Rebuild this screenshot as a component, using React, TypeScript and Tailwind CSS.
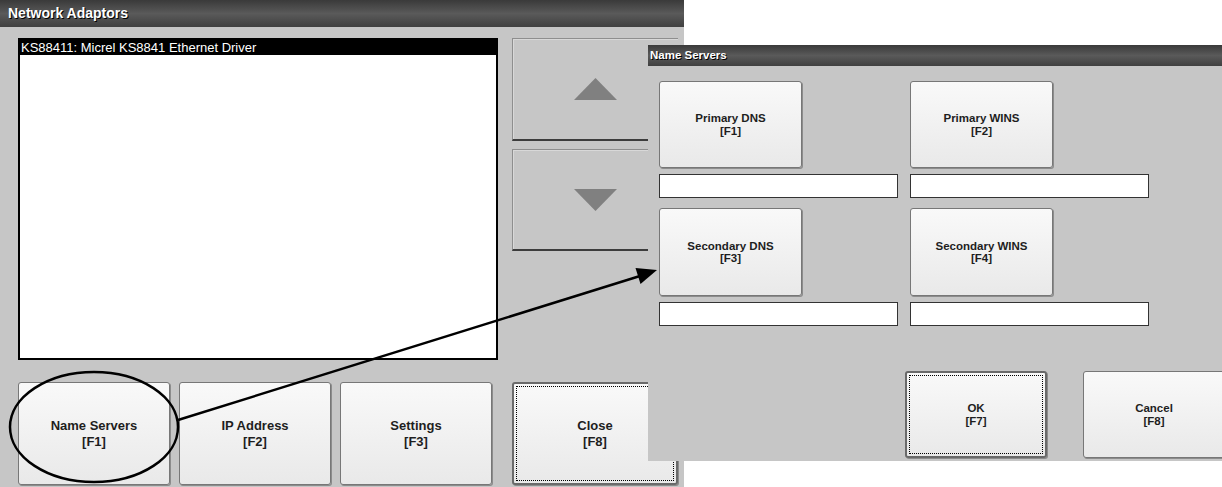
import React from 'react';

type KeyButtonProps = {
  label: string;
  fkey: string;
  size: string;
  small?: boolean;
  focused?: boolean;
};

// Windows CE style push button with a function key hint
const KeyButton: React.FC<KeyButtonProps> = ({ label, fkey, size, small, focused }) => {
  return (
    <div
      className={`relative flex shrink-0 flex-col items-center justify-center rounded-[3px] bg-linear-to-b from-[#f9f9f9] via-[#f1f1f1] to-[#e9e9e9] font-bold text-[#1e1e1e] shadow-[1px_1px_0_#8c8c8c] ${size} ${
        focused ? 'border-2 border-[#6a6a6a]' : 'border border-[#777]'
      } ${small ? 'text-[11.5px] leading-[12.5px]' : 'text-[13px] leading-[16px]'}`}
    >
      {focused && <div className="pointer-events-none absolute inset-[2px] border border-dotted border-black" />}
      <span>{label}</span>
      <span>{fkey}</span>
    </div>
  );
};

const ScrollButton: React.FC<{ up?: boolean; h: string }> = ({ up, h }) => (
  <div className={`flex w-[166px] items-center justify-center border-t border-l border-[#8e8e8e] border-b-2 border-b-[#3c3c3c] bg-[#c6c6c6] shadow-[inset_1px_1px_0_#d8d8d8] ${h}`}>
    <svg width="43" height="22" viewBox="0 0 43 22">
      {up ? <polygon points="21.5,0 43,22 0,22" fill="#808080" /> : <polygon points="0,0 43,0 21.5,22" fill="#808080" />}
    </svg>
  </div>
);

const TextBox: React.FC = () => <div className="h-[24px] w-[239px] border border-[#333] bg-white" />;

const App: React.FC = () => {
  return (
    <div className="relative h-[487px] w-[1222px] overflow-hidden bg-white font-['Liberation_Sans',Arial,sans-serif]">
      {/* Network Adaptors window */}
      <div className="flex h-[487px] w-[684px] flex-col bg-[#c6c6c6]">
        <div className="flex h-[27px] items-center bg-linear-to-b from-[#3a3a3a] via-[#5a5a5a] to-[#404040] pl-2 text-[14px] font-bold text-white [text-shadow:1px_1px_0_#000]">
          Network Adaptors
        </div>
        <div className="flex flex-col pl-[18px] pt-[11px]">
          <div className="flex gap-[14px]">
            <div className="h-[322px] w-[480px] border-2 border-black bg-white">
              <div className="h-[15px] bg-black pl-[1px] text-[13px] leading-[15px] text-white">
                KS88411: Micrel KS8841 Ethernet Driver
              </div>
            </div>
            <div className="flex flex-col gap-2">
              <ScrollButton up h="h-[103px]" />
              <ScrollButton h="h-[102px]" />
            </div>
          </div>
          <div className="mt-[22px] flex">
            <div className="flex gap-[9px]">
              <KeyButton label="Name Servers" fkey="[F1]" size="w-[152px] h-[103px]" />
              <KeyButton label="IP Address" fkey="[F2]" size="w-[152px] h-[103px]" />
              <KeyButton label="Settings" fkey="[F3]" size="w-[152px] h-[103px]" />
            </div>
            <div className="ml-[20px]">
              <KeyButton label="Close" fkey="[F8]" size="w-[166px] h-[103px]" focused />
            </div>
          </div>
        </div>
      </div>

      {/* Name Servers dialog */}
      <div className="absolute left-[648px] top-[45px] flex h-[416px] w-[574px] flex-col bg-[#c6c6c6]">
        <div className="flex h-[21px] items-center bg-linear-to-b from-[#3a3a3a] via-[#5a5a5a] to-[#404040] pl-[2px] text-[11.5px] font-bold text-white [text-shadow:1px_1px_0_#000]">
          Name Servers
        </div>
        <div className="flex flex-col pl-[11px] pt-[15px]">
          <div className="grid w-[490px] grid-cols-2 gap-x-[12px] gap-y-[10px]">
            <div className="flex flex-col gap-[6px]">
              <KeyButton label="Primary DNS" fkey="[F1]" size="w-[143px] h-[87px]" small />
              <TextBox />
            </div>
            <div className="flex flex-col gap-[6px]">
              <KeyButton label="Primary WINS" fkey="[F2]" size="w-[143px] h-[87px]" small />
              <TextBox />
            </div>
            <div className="flex flex-col gap-[6px]">
              <KeyButton label="Secondary DNS" fkey="[F3]" size="w-[143px] h-[88px]" small />
              <TextBox />
            </div>
            <div className="flex flex-col gap-[6px]">
              <KeyButton label="Secondary WINS" fkey="[F4]" size="w-[143px] h-[88px]" small />
              <TextBox />
            </div>
          </div>
          <div className="ml-[246px] mt-[45px] flex gap-[36px]">
            <KeyButton label="OK" fkey="[F7]" size="w-[142px] h-[87px]" small focused />
            <KeyButton label="Cancel" fkey="[F8]" size="w-[142px] h-[87px]" small />
          </div>
        </div>
      </div>

      {/* annotation: circle round the button and arrow to the dialog */}
      <svg className="pointer-events-none absolute left-0 top-0" width="1222" height="487" viewBox="0 0 1222 487">
        <ellipse cx="94" cy="427" rx="84" ry="55" fill="none" stroke="#000" strokeWidth="2.5" />
        <line x1="178" y1="420" x2="640" y2="276" stroke="#000" strokeWidth="2.5" />
        <polygon points="657,270 640.5,284 635.5,268" fill="#000" />
      </svg>
    </div>
  );
};

export default App;
